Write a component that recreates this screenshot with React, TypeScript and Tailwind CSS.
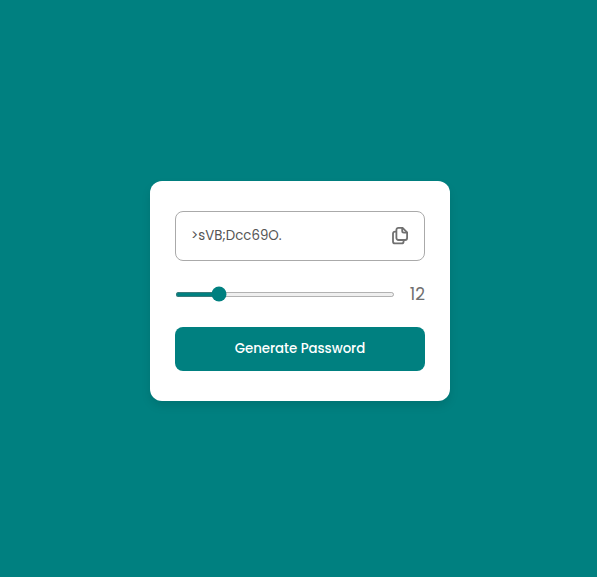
import { useState } from "react";

function CopyIcon() {
  return (
    <svg width="24" height="24" viewBox="0 0 24 24" fill="none" stroke="#707070" strokeWidth="1.8" strokeLinejoin="round" strokeLinecap="round">
      <path d="M10.4 3.9h4.2l4.5 4.5v5.6a2 2 0 0 1-2 2h-6.7a2 2 0 0 1-2-2V5.9a2 2 0 0 1 2-2z" />
      <path d="M14.2 4.2v2.9a1.6 1.6 0 0 0 1.6 1.6h3" />
      <path d="M7.8 7.6H7a2 2 0 0 0-2 2v7.8a2 2 0 0 0 2 2h6.6a2 2 0 0 0 2-2v-.8" />
    </svg>
  );
}

export default function App() {
  const [length, setLength] = useState(12);
  return (
    <main className="flex h-[577px] w-full items-center justify-center bg-[#008080] pt-[5px] pl-[3px] font-['Poppins','Inter',sans-serif] text-[#707070]">
      <section className="flex h-[220px] w-[300px] flex-col rounded-xl bg-white px-[25px] py-[30px] shadow-[0_5px_10px_rgba(0,0,0,0.1)]">
        <div className="flex h-[50px] shrink-0 items-center justify-between rounded-lg border border-[#aaaaaa] pr-[12px] pl-[15px]">
          <span className="text-[13.333px] text-[#555555]">{">sVB;Dcc69O."}</span>
          <button aria-label="Copy password">
            <CopyIcon />
          </button>
        </div>
        <div className="mt-[21px] flex h-6 items-center justify-between">
          <input
            type="range"
            min={6}
            max={40}
            value={length}
            onChange={(e) => setLength(Number(e.target.value))}
            className="h-[5px] w-[220px] accent-[#008080]"
          />
          <span className="pt-0.5 text-[17px]">{length}</span>
        </div>
        <button className="mt-[21px] h-11 shrink-0 rounded-lg bg-[#008080] text-[13.333px] font-medium tracking-[-0.04px] text-white">
          Generate Password
        </button>
      </section>
    </main>
  );
}
